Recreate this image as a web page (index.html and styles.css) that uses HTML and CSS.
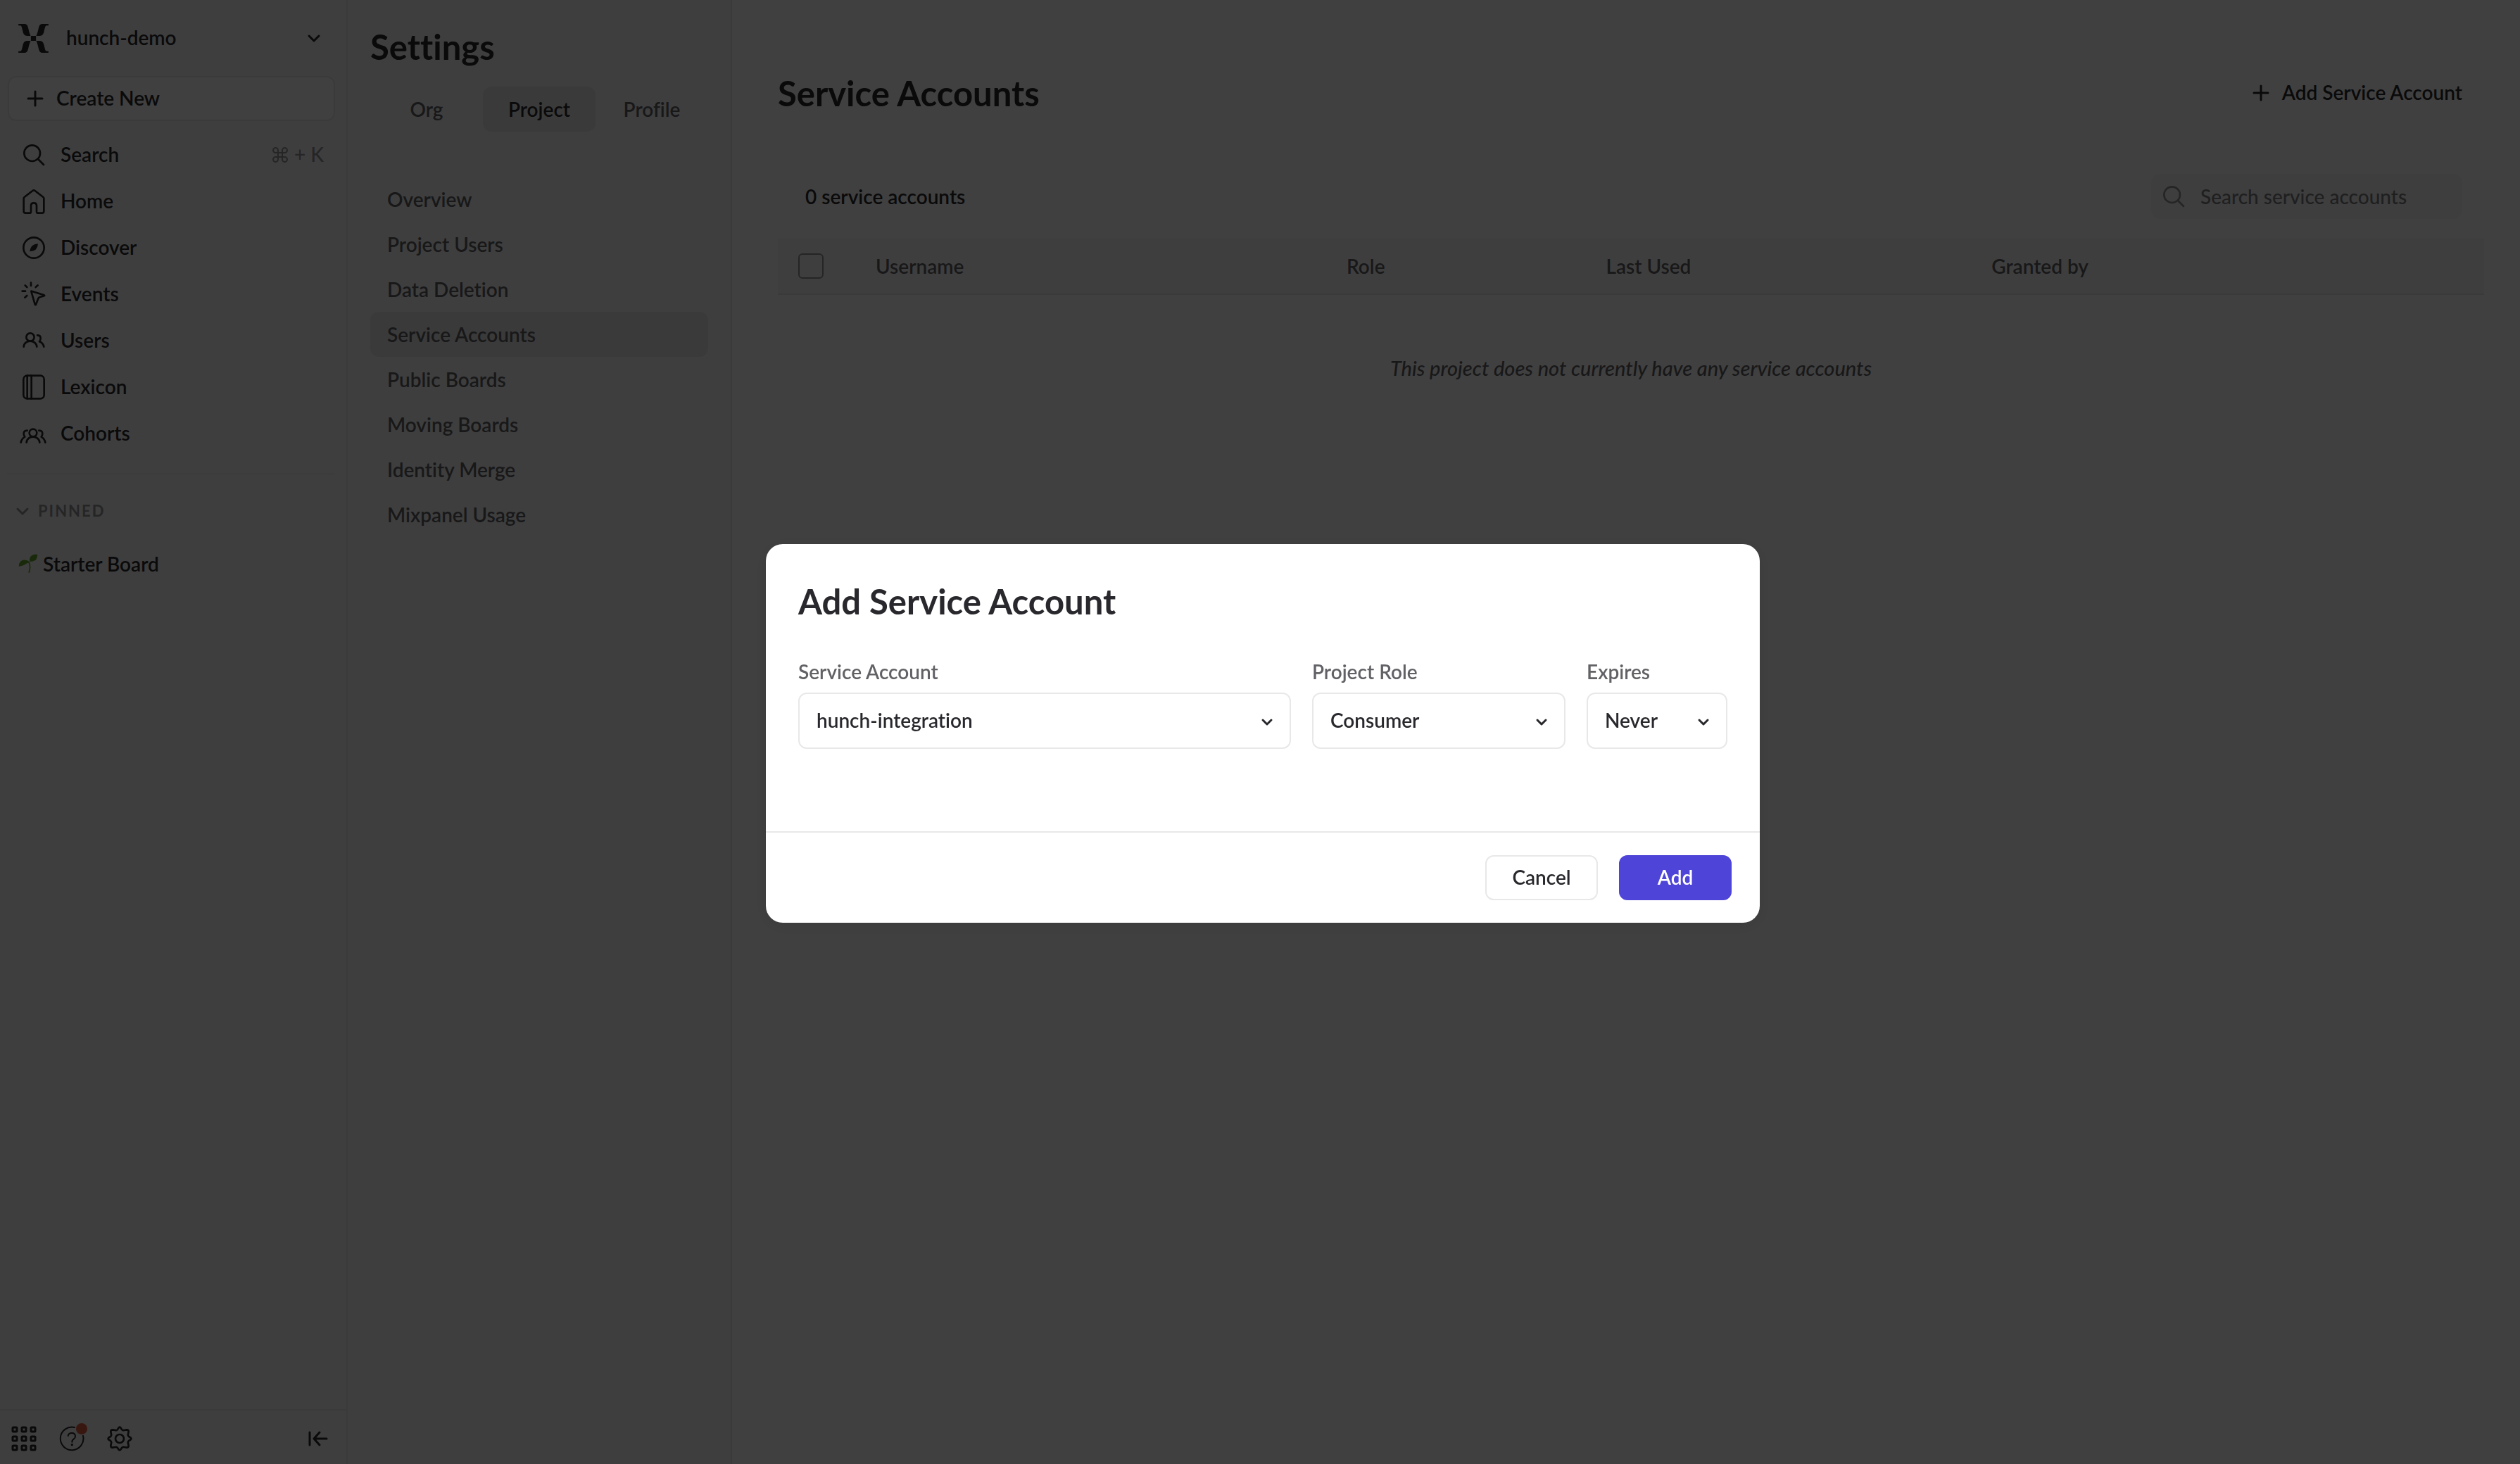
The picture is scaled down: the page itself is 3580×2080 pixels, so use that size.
FILE: index.html
```html
<!DOCTYPE html>
<html lang="en">
<head>
  <meta charset="utf-8">
  <title>Service Accounts</title>
  <link rel="stylesheet" href="styles.css">
</head>
<body>
  <div class="app">
    <aside class="sidebar">
      <button class="project-switch" type="button">
        <svg class="logo" viewBox="80 99 128 123" aria-hidden="true">
          <g id="wings">
            <path d="M80 99H105C117 99 119 106 122 117C125 130 127 139 132 150H117C106 149 102 144 99 132C95 117 94 106 88 106H80Z"/>
            <path d="M208 99H183C171 99 169 106 166 117C163 130 161 139 156 150H171C182 149 186 144 189 132C193 117 194 106 200 106H208Z"/>
          </g>
          <use href="#wings" transform="matrix(1 0 0 -1 0 321)"/>
          <rect x="133" y="150" width="22" height="21"/>
        </svg>
        <span class="label">hunch-demo</span>
        <svg class="chevron" viewBox="0 0 20 20" aria-hidden="true"><path d="M3 7l7 7 7-7"/></svg>
      </button>

      <button class="create" type="button">
        <svg class="plus" viewBox="0 0 24 24" aria-hidden="true"><path d="M12 2v20M2 12h20"/></svg>
        <span class="label">Create New</span>
      </button>

      <nav class="nav" aria-label="Main">
        <a class="nav-row" href="#search">
          <svg class="icon" viewBox="84 600 120 120" aria-hidden="true"><circle cx="137" cy="653" r="34"/><path d="M162 678l24 24"/></svg>
          <span class="label">Search</span>
          <span class="shortcut">
            <svg class="command" viewBox="0 0 24 24" aria-hidden="true"><path d="M9 5.500a3.500 3.500 0 1 0-3.500 3.500h13a3.500 3.500 0 1 0-3.500-3.500v13a3.500 3.500 0 1 0 3.500-3.500h-13a3.500 3.500 0 1 0 3.500 3.500z"/></svg>
            <span class="label">+ K</span>
          </span>
        </a>
        <a class="nav-row" href="#home">
          <svg class="icon" viewBox="84 798 120 120" aria-hidden="true"><path d="M101 846Q101 842 104 840L139 813Q144 809 149 813L184 840Q187 842 187 846V900Q187 908 179 908H162Q156 908 156 902V877Q156 865 144 865T132 877V902Q132 908 126 908H109Q101 908 101 900Z"/></svg>
          <span class="label">Home</span>
        </a>
        <a class="nav-row" href="#discover">
          <svg class="icon" viewBox="84 996 120 120" aria-hidden="true"><circle cx="144" cy="1056" r="44"/><path class="solid" d="M127 1072Q129 1055 138 1047Q147 1040 162 1039Q160 1056 151 1065Q142 1071 127 1072Z"/></svg>
          <span class="label">Discover</span>
        </a>
        <a class="nav-row" href="#events">
          <svg class="icon" viewBox="84 54 120 120" aria-hidden="true"><path d="M132 65V78M107 76L115 84M161 76L152 84M95 101H108M106 128L115 120M133 102Q132 100 135 101L188 118Q191 120 188 121L169 127Q165 128 163 132L153 158Q151 161 149 157Z"/></svg>
          <span class="label">Events</span>
        </a>
        <a class="nav-row" href="#users">
          <svg class="icon" viewBox="84 252 120 120" aria-hidden="true"><circle cx="129" cy="297" r="17"/><path d="M101 338C103 306 154 306 157 338M159 289Q173 289 173 301Q173 310 168 316Q184 322 187 338"/></svg>
          <span class="label">Users</span>
        </a>
        <a class="nav-row" href="#lexicon">
          <svg class="icon" viewBox="84 450 120 120" aria-hidden="true"><rect x="100" y="461" width="88" height="98" rx="16"/><path d="M116 461V559M134 461V559"/></svg>
          <span class="label">Lexicon</span>
        </a>
        <a class="nav-row" href="#cohorts">
          <svg class="icon" viewBox="84 648 120 120" aria-hidden="true"><circle cx="141" cy="705" r="16"/><path d="M113 746C115 714 166 714 169 746M116 695Q101 695 101 709Q101 715 106 722Q92 730 89 746M166 695Q181 695 181 709Q181 715 176 722Q190 730 193 746"/></svg>
          <span class="label">Cohorts</span>
        </a>
      </nav>

      <section class="pinned">
        <button class="pinned-toggle" type="button">
          <svg class="chevron" viewBox="0 0 20 20" aria-hidden="true"><path d="M3 7l7 7 7-7"/></svg>
          <span>PINNED</span>
        </button>
        <a class="board" href="#starter-board">
          <svg class="seedling" viewBox="78 1222 84 84" aria-hidden="true">
            <path class="stem" d="M124 1300Q131 1277 124 1258"/>
            <path class="leaf" d="M80 1275Q82 1246 108 1248Q121 1249 127 1258Q112 1262 103 1269Q93 1273 80 1275ZM127 1255Q122 1234 138 1227Q150 1222 160 1225Q158 1243 151 1249Q141 1255 127 1255Z"/>
          </svg>
          <span>Starter Board</span>
        </a>
      </section>

      <footer class="sidebar-foot">
        <button class="tool" type="button" aria-label="Apps">
          <svg viewBox="0 0 36 36" aria-hidden="true"><g id="apps-row"><rect x="2" y="2" width="6" height="6" rx="1"/><rect x="15" y="2" width="6" height="6" rx="1"/><rect x="28" y="2" width="6" height="6" rx="1"/></g><use href="#apps-row" y="13"/><use href="#apps-row" y="26"/></svg>
        </button>
        <button class="tool" type="button" aria-label="Help">
          <svg viewBox="252 198 108 108" aria-hidden="true"><path class="thin" d="M318 204A49 49 0 1 0 354 240M290 240Q292 228 306 228Q321 228 321 242Q321 249 314 254Q307 258 307 266"/><circle class="solid" cx="307" cy="278" r="5"/></svg>
          <span class="alert-dot"></span>
        </button>
        <button class="tool" type="button" aria-label="Settings">
          <svg viewBox="-54 -54 108 108" aria-hidden="true"><circle r="18"/><path d="M-4 -47Q0 -51 4 -47L9 -39Q13 -34 19 -36L30 -38Q38 -38 38 -30L36 -19Q34 -13 39 -9L47 -4Q51 0 47 4L39 9Q34 13 36 19L38 30Q38 38 30 38L19 36Q13 34 9 39L4 47Q0 51 -4 47L-9 39Q-13 34 -19 36L-30 38Q-38 38 -38 30L-36 19Q-34 13 -39 9L-47 4Q-51 0 -47 -4L-39 -9Q-34 -13 -36 -19L-38 -30Q-38 -38 -30 -38L-19 -36Q-13 -34 -9 -39Z"/></svg>
        </button>
        <button class="tool collapse" type="button" aria-label="Collapse sidebar">
          <svg viewBox="0 0 36 36" aria-hidden="true"><path d="M6 9v18M30 18H13M20 9l-8 9 8 9"/></svg>
        </button>
      </footer>
    </aside>

    <section class="settings">
      <h1 class="title">Settings</h1>
      <div class="tabs" role="tablist">
        <button class="tab" type="button" role="tab">Org</button>
        <button class="tab tab-active" type="button" role="tab" aria-selected="true">Project</button>
        <button class="tab" type="button" role="tab">Profile</button>
      </div>
      <nav class="menu" aria-label="Project settings">
        <a class="menu-item" href="#overview">Overview</a>
        <a class="menu-item" href="#project-users">Project Users</a>
        <a class="menu-item" href="#data-deletion">Data Deletion</a>
        <a class="menu-item menu-active" href="#service-accounts">Service Accounts</a>
        <a class="menu-item" href="#public-boards">Public Boards</a>
        <a class="menu-item" href="#moving-boards">Moving Boards</a>
        <a class="menu-item" href="#identity-merge">Identity Merge</a>
        <a class="menu-item" href="#usage">Mixpanel Usage</a>
      </nav>
    </section>

    <main class="main">
      <header class="page-head">
        <h2 class="title">Service Accounts</h2>
        <button class="add-link" type="button">
          <svg class="plus" viewBox="0 0 24 24" aria-hidden="true"><path d="M12 2v20M2 12h20"/></svg>
          <span class="label">Add Service Account</span>
        </button>
      </header>
      <div class="toolbar">
        <span class="count">0 service accounts</span>
        <label class="search">
          <svg class="icon" viewBox="84 600 120 120" aria-hidden="true"><circle cx="137" cy="653" r="34"/><path d="M162 678l24 24"/></svg>
          <input class="search-input" type="text" placeholder="Search service accounts" aria-label="Search service accounts">
        </label>
      </div>
      <table class="accounts">
        <colgroup>
          <col class="col-check"><col class="col-name"><col class="col-role"><col class="col-used"><col>
        </colgroup>
        <thead>
          <tr>
            <th class="check-cell"><input class="check" type="checkbox" aria-label="Select all"></th>
            <th>Username</th>
            <th>Role</th>
            <th>Last Used</th>
            <th>Granted by</th>
          </tr>
        </thead>
        <tbody>
          <tr><td class="empty" colspan="5">This project does not currently have any service accounts</td></tr>
        </tbody>
      </table>
    </main>
  </div>

  <div class="overlay">
    <form class="modal" role="dialog" aria-modal="true" aria-labelledby="modal-title">
      <div class="modal-body">
        <h2 class="title" id="modal-title">Add Service Account</h2>
        <div class="fields">
          <div class="field">
            <label for="account">Service Account</label>
            <div class="select">
              <select id="account"><option>hunch-integration</option></select>
              <svg class="chevron" viewBox="0 0 20 20" aria-hidden="true"><path d="M4 7l6 6 6-6"/></svg>
            </div>
          </div>
          <div class="field">
            <label for="role">Project Role</label>
            <div class="select">
              <select id="role"><option>Consumer</option></select>
              <svg class="chevron" viewBox="0 0 20 20" aria-hidden="true"><path d="M4 7l6 6 6-6"/></svg>
            </div>
          </div>
          <div class="field">
            <label for="expires">Expires</label>
            <div class="select">
              <select id="expires"><option>Never</option></select>
              <svg class="chevron" viewBox="0 0 20 20" aria-hidden="true"><path d="M4 7l6 6 6-6"/></svg>
            </div>
          </div>
        </div>
      </div>
      <footer class="modal-foot">
        <button class="btn" type="button">Cancel</button>
        <button class="btn btn-primary" type="submit">Add</button>
      </footer>
    </form>
  </div>
</body>
</html>
```
FILE: styles.css
```css
:root {
  --ink: #28282d;
  --muted: #626266;
  --faint: #949498;
  --line: #e8e8e8;
  --panel: #f8f8f8;
  --hover: #e8e8e8;
  --accent: #4f44d8;
}

* {
  box-sizing: border-box;
}

body {
  margin: 0;
  background: #fff;
  color: var(--ink);
  font: 600 28px/36px Lato, "Open Sans", sans-serif;
  font-variant-ligatures: none;
}

button,
input,
select {
  color: inherit;
  font: inherit;
  font-variant-ligatures: none;
}

button {
  margin: 0;
  padding: 0;
  border: 0;
  background: none;
  cursor: pointer;
}

a {
  color: inherit;
  text-decoration: none;
}

svg {
  display: block;
  flex: none;
  fill: none;
  stroke: currentColor;
  stroke-linecap: round;
  stroke-linejoin: round;
}

.title {
  margin: 0;
  font-size: 49px;
  font-weight: 700;
  line-height: 60px;
}

.label {
  padding-bottom: 2px;
}

.icon {
  width: 40px;
  height: 40px;
  stroke-width: 8;
}

.icon .solid {
  fill: currentColor;
  stroke: none;
}

.chevron {
  width: 20px;
  height: 20px;
  stroke-width: 3;
}

.plus {
  width: 24px;
  height: 24px;
  stroke-width: 3;
}

.app {
  display: flex;
  min-height: 100vh;
}

/* Sidebar */

.sidebar {
  display: flex;
  flex: none;
  flex-direction: column;
  width: 494px;
  border-right: 2px solid var(--line);
  background: var(--panel);
}

.project-switch {
  display: flex;
  align-items: center;
  height: 108px;
  padding: 0 36px 0 26px;
  gap: 25px;
}

.project-switch .chevron {
  margin-left: auto;
}

.logo {
  width: 43px;
  height: 41px;
  fill: currentColor;
  stroke: none;
}

.create {
  display: flex;
  align-items: center;
  height: 64px;
  margin: 0 16px 15px 11px;
  padding: 0 25px;
  gap: 18px;
  border: 2px solid var(--line);
  border-radius: 12px;
  background: #fff;
}

.nav-row {
  display: flex;
  align-items: center;
  height: 66px;
  padding: 0 32px 0 28px;
  gap: 18px;
}

.shortcut {
  display: flex;
  align-items: center;
  margin-left: auto;
  gap: 8px;
  color: var(--faint);
  font-weight: 500;
}

.command {
  width: 24px;
  height: 24px;
  stroke-width: 2;
}

.pinned {
  margin: 23px 16px 0 10px;
  padding-top: 34px;
  border-top: 2px solid #eee;
}

.pinned-toggle {
  display: flex;
  align-items: center;
  margin-bottom: 24px;
  padding-left: 12px;
  gap: 12px;
  color: var(--faint);
  font-size: 22px;
  font-weight: 700;
  letter-spacing: 2px;
}

.board {
  display: flex;
  align-items: center;
  height: 66px;
  padding-left: 16px;
  gap: 7px;
}

.seedling {
  width: 28px;
  height: 28px;
  stroke: none;
}

.leaf {
  fill: #65a82c;
}

.stem {
  stroke: #7cb342;
  stroke-width: 6;
}

.sidebar-foot {
  display: flex;
  align-items: center;
  height: 78px;
  margin-top: auto;
  padding: 4px 22px 0 16px;
  gap: 32px;
  border-top: 2px solid var(--line);
}

.tool {
  position: relative;
  width: 36px;
  height: 36px;
}

.tool svg {
  width: 36px;
  height: 36px;
  stroke-width: 3;
}

.tool svg[viewBox$="108"] {
  stroke-width: 8;
}

.tool .thin {
  stroke-width: 6;
}

.tool .solid {
  fill: currentColor;
  stroke: none;
}

.collapse {
  margin-left: auto;
}

.alert-dot {
  position: absolute;
  top: -4px;
  right: -4px;
  width: 16px;
  height: 16px;
  border-radius: 50%;
  background: #e05c40;
}

/* Settings panel */

.settings {
  flex: none;
  width: 546px;
  padding: 36px 32px;
  border-right: 2px solid var(--line);
  background: var(--panel);
}

.tabs {
  display: grid;
  grid-template-columns: repeat(3, 1fr);
  margin: 27px 0 64px;
}

.tab {
  height: 64px;
  border-radius: 12px;
  color: var(--muted);
}

.tab-active {
  background: var(--hover);
  color: var(--ink);
}

.menu-item {
  display: block;
  padding: 14px 24px;
  border-radius: 12px;
  color: var(--muted);
}

.menu-active {
  background: var(--hover);
}

/* Main column */

.main {
  flex: 1;
  min-width: 0;
  padding: 100px 51px 64px 65px;
}

.page-head,
.toolbar {
  display: flex;
  align-items: center;
  justify-content: space-between;
  height: 64px;
  padding-right: 31px;
}

.add-link {
  display: flex;
  align-items: center;
  gap: 18px;
}

.toolbar {
  margin: 83px 0 28px;
  padding-left: 39px;
}

.search {
  display: flex;
  align-items: center;
  width: 442px;
  height: 64px;
  padding: 0 12px;
  gap: 18px;
  border-radius: 12px;
  background: var(--panel);
  color: var(--faint);
  font-weight: 500;
}

.search-input {
  flex: 1;
  min-width: 0;
  padding: 0;
  border: 0;
  outline: 0;
  background: none;
}

.search-input::placeholder {
  color: #7c7c80;
  opacity: 1;
}

.accounts {
  width: 100%;
  border-spacing: 0;
  table-layout: fixed;
}

.col-check {
  width: 139px;
}

.col-name {
  width: 27.6%;
}

.col-role {
  width: 15.2%;
}

.col-used {
  width: 22.6%;
}

.accounts th {
  height: 80px;
  padding: 0;
  border-bottom: 2px solid var(--line);
  background: var(--panel);
  color: var(--muted);
  font-weight: 600;
  text-align: left;
}

.accounts .check-cell {
  padding-left: 29px;
}

.check {
  display: block;
  width: 36px;
  height: 36px;
  margin: 0;
  border: 2px solid var(--faint);
  border-radius: 6px;
  appearance: none;
}

.accounts .empty {
  padding: 86px 0 0;
  color: var(--muted);
  font-size: 29px;
  font-style: italic;
  font-weight: 500;
  text-align: center;
}

/* Dialog */

.overlay {
  position: fixed;
  inset: 0;
  display: flex;
  align-items: center;
  justify-content: center;
  padding: 4px 0 0 8px;
  background: rgba(0, 0, 0, 0.75);
}

.modal {
  width: 1412px;
  max-width: 100%;
  border-radius: 24px;
  background: #fff;
  box-shadow: 0 4px 24px rgba(0, 0, 0, 0.1);
}

.modal-body {
  padding: 51px 46px 117px;
}

.fields {
  display: grid;
  grid-template-columns: 35fr 18fr 10fr;
  margin-top: 52px;
  gap: 30px;
}

.field label {
  display: block;
  margin-bottom: 12px;
  color: var(--muted);
}

.select {
  position: relative;
}

.select select {
  display: block;
  width: 100%;
  height: 80px;
  padding: 0 56px 2px 24px;
  border: 2px solid var(--line);
  border-radius: 12px;
  background: #fff;
  appearance: none;
}

.select .chevron {
  position: absolute;
  top: 32px;
  right: 24px;
  pointer-events: none;
}

.modal-foot {
  display: flex;
  justify-content: flex-end;
  padding: 32px 40px;
  gap: 30px;
  border-top: 2px solid var(--line);
}

.btn {
  width: 160px;
  height: 64px;
  padding-bottom: 2px;
  border: 2px solid var(--line);
  border-radius: 12px;
  background: #fff;
}

.btn-primary {
  border-color: var(--accent);
  background: var(--accent);
  color: #fff;
}
```
